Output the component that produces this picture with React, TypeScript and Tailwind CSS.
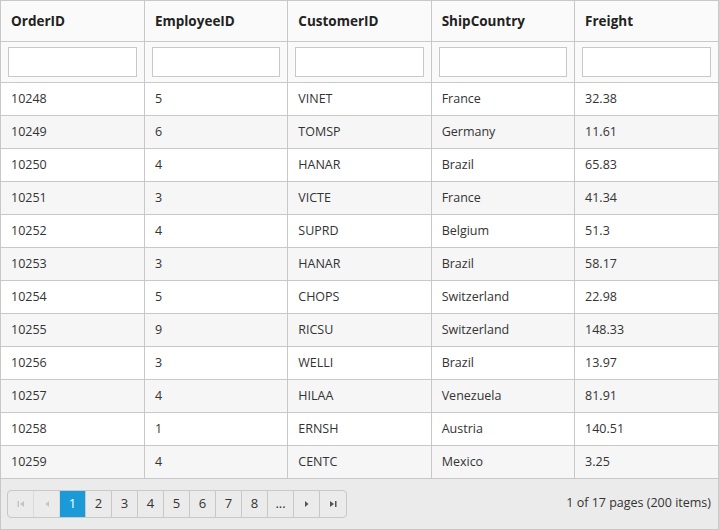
import React from "react";

type Order = {
  id: number;
  emp: number;
  cust: string;
  country: string;
  freight: string;
};

const orders: Order[] = [
  { id: 10248, emp: 5, cust: "VINET", country: "France", freight: "32.38" },
  { id: 10249, emp: 6, cust: "TOMSP", country: "Germany", freight: "11.61" },
  { id: 10250, emp: 4, cust: "HANAR", country: "Brazil", freight: "65.83" },
  { id: 10251, emp: 3, cust: "VICTE", country: "France", freight: "41.34" },
  { id: 10252, emp: 4, cust: "SUPRD", country: "Belgium", freight: "51.3" },
  { id: 10253, emp: 3, cust: "HANAR", country: "Brazil", freight: "58.17" },
  { id: 10254, emp: 5, cust: "CHOPS", country: "Switzerland", freight: "22.98" },
  { id: 10255, emp: 9, cust: "RICSU", country: "Switzerland", freight: "148.33" },
  { id: 10256, emp: 3, cust: "WELLI", country: "Brazil", freight: "13.97" },
  { id: 10257, emp: 4, cust: "HILAA", country: "Venezuela", freight: "81.91" },
  { id: 10258, emp: 1, cust: "ERNSH", country: "Austria", freight: "140.51" },
  { id: 10259, emp: 4, cust: "CENTC", country: "Mexico", freight: "3.25" },
];

const columns = ["OrderID", "EmployeeID", "CustomerID", "ShipCountry", "Freight"];

const PagerIcon = ({ kind }: { kind: "first" | "prev" | "next" | "last" }) => {
  const disabled = kind === "first" || kind === "prev";
  const fill = disabled ? "#c4c4c4" : "#555";
  return (
    <svg width="10" height="10" viewBox="0 0 10 10">
      {kind === "first" && (
        <>
          <rect x="1.5" y="2" width="1.5" height="6" fill={fill} />
          <path d="M8 2 L4 5 L8 8 Z" fill={fill} />
        </>
      )}
      {kind === "prev" && <path d="M7 2 L3.5 5 L7 8 Z" fill={fill} />}
      {kind === "next" && <path d="M3 2 L6.5 5 L3 8 Z" fill={fill} />}
      {kind === "last" && (
        <>
          <path d="M2 2 L6 5 L2 8 Z" fill={fill} />
          <rect x="7" y="2" width="1.5" height="6" fill={fill} />
        </>
      )}
    </svg>
  );
};

export default function App() {
  const pages = ["1", "2", "3", "4", "5", "6", "7", "8", "..."];

  return (
    <div
      className="w-[719px] h-[530px] bg-white text-[12.5px] text-[#333]"
      style={{ fontFamily: '"Open Sans", "Noto Sans", sans-serif' }}
    >
      <div className="w-[719px] h-[530px] border border-[#c8c8c8] flex flex-col">
        <table className="w-full table-fixed border-collapse">
          <thead>
            <tr className="h-[40px] bg-[#fafafa]">
              {columns.map((c, i) => (
                <th
                  key={c}
                  className={`text-left font-bold text-[13.5px] text-[#222] px-[10px] border-b border-[#c8c8c8] ${
                    i > 0 ? "border-l" : ""
                  }`}
                >
                  {c}
                </th>
              ))}
            </tr>
            <tr className="h-[41px] bg-[#fafafa]">
              {columns.map((c, i) => (
                <th
                  key={c}
                  className={`px-[7px] border-b border-[#c8c8c8] ${i > 0 ? "border-l" : ""}`}
                >
                  <input
                    className="block w-full h-[30px] bg-white border border-[#c8c8c8] outline-none"
                    aria-label={c}
                  />
                </th>
              ))}
            </tr>
          </thead>
          <tbody>
            {orders.map((o, r) => (
              <tr key={o.id} className={`h-[33px] ${r % 2 === 1 ? "bg-[#f6f6f6]" : "bg-white"}`}>
                {[o.id, o.emp, o.cust, o.country, o.freight].map((v, i) => (
                  <td
                    key={i}
                    className={`px-[10px] pt-[2px] border-b border-[#c8c8c8] ${i > 0 ? "border-l" : ""}`}
                  >
                    {v}
                  </td>
                ))}
              </tr>
            ))}
          </tbody>
        </table>

        <div className="flex-1 bg-[#ebebeb] flex items-center justify-between pl-[6px] pr-[7px]">
          <div className="flex h-[28px] border border-[#c8c8c8] rounded-[4px] overflow-hidden">
            <button className="w-[26px] flex items-center justify-center border-r border-[#dadada]">
              <PagerIcon kind="first" />
            </button>
            <button className="w-[26px] flex items-center justify-center border-r border-[#dadada]">
              <PagerIcon kind="prev" />
            </button>
            {pages.map((p) => (
              <button
                key={p}
                className={`w-[26px] flex items-center justify-center border-r border-[#c8c8c8] text-[13px] ${
                  p === "1" ? "bg-[#1a9ad6] text-white" : "text-[#333]"
                }`}
              >
                {p}
              </button>
            ))}
            <button className="w-[26px] flex items-center justify-center border-r border-[#c8c8c8]">
              <PagerIcon kind="next" />
            </button>
            <button className="w-[26px] flex items-center justify-center">
              <PagerIcon kind="last" />
            </button>
          </div>
          <div className="text-[12.5px] text-[#333]">1 of 17 pages (200 items)</div>
        </div>
      </div>
    </div>
  );
}
